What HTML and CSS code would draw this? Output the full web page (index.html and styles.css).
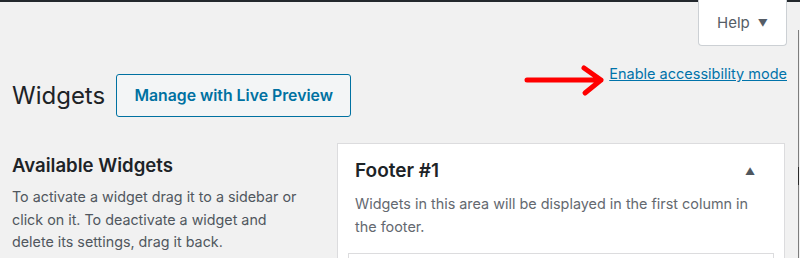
FILE: index.html
```html
<!DOCTYPE html>
<html>
<head>
<meta charset="utf-8">
<link rel="stylesheet" href="styles.css">
</head>
<body>
<div class="adminbar"></div>
<div class="scrollbar"><div class="thumb"></div></div>
<div class="page">
  <div class="screen-meta">
    <button class="help-tab">Help <span class="caret">&#9660;</span></button>
  </div>
  <div class="header">
    <div class="title-group">
      <h1 class="title">Widgets</h1>
      <a class="live-btn" href="#">Manage with Live Preview</a>
    </div>
    <div class="a11y">
      <svg class="arrow" width="86" height="36" viewBox="0 0 86 36">
        <path d="M6 18 H80 M63 6 L80 18 L64 31" fill="none" stroke="#ff0000" stroke-width="5" stroke-linecap="round" stroke-linejoin="round"/>
      </svg>
      <a class="a11y-link" href="#">Enable accessibility mode</a>
    </div>
  </div>
  <div class="columns">
    <div class="left">
      <h2 class="avail-title">Available Widgets</h2>
      <p class="avail-desc">To activate a widget drag it to a sidebar or click on it. To deactivate a widget and delete its settings, drag it back.</p>
    </div>
    <div class="sidebar-card">
      <div class="card-head">
        <h2 class="card-title">Footer #1</h2>
        <span class="card-toggle">&#9650;</span>
      </div>
      <p class="card-desc">Widgets in this area will be displayed in the first column in the footer.</p>
      <div class="card-holder"></div>
    </div>
  </div>
</div>
</body>
</html>
```
FILE: styles.css
```css
html, body {
  margin: 0;
  padding: 0;
  height: 100%;
  overflow: hidden;
}
body {
  background: #f1f1f1;
  font-family: Inter, "Noto Sans", sans-serif;
  color: #1d2327;
  position: relative;
}
.adminbar {
  height: 2px;
  background: #23282d;
}
.scrollbar {
  position: absolute;
  top: 30px;
  bottom: 0;
  left: 798px;
  width: 1px;
  background: #7d7d7d;
}
.thumb {
  margin-top: 137px;
  height: 18px;
  background: #2a2a2a;
}
.page {
  padding: 0 13px 0 10px;
}
.screen-meta {
  display: flex;
  justify-content: flex-end;
}
.help-tab {
  width: 89px;
  height: 46px;
  margin-top: -2px;
  background: #fff;
  border: 1px solid #ccd0d4;
  border-top: none;
  border-radius: 0 0 4px 4px;
  font-family: inherit;
  font-size: 15px;
  color: #555d66;
  display: flex;
  align-items: center;
  justify-content: center;
  gap: 8px;
  padding: 0;
}
.caret {
  font-size: 10px;
  color: #555d66;
}
.header {
  display: flex;
  justify-content: space-between;
  align-items: flex-start;
  margin-top: 27px;
}
.title-group {
  display: flex;
  align-items: center;
  gap: 11px;
  padding-top: 1px;
}
.title {
  margin: 0;
  font-size: 24px;
  font-weight: 400;
  color: #1d2327;
  padding-left: 2px;
}
.live-btn {
  display: flex;
  align-items: center;
  justify-content: center;
  width: 233px;
  height: 41px;
  border: 1px solid #0071a1;
  border-radius: 3px;
  background: #f3f5f6;
  color: #0071a1;
  font-size: 15.8px;
  font-weight: 600;
  text-decoration: none;
}
.a11y {
  display: flex;
  align-items: center;
  margin-top: -11px;
}
.arrow {
  margin-right: 2px;
}
.a11y-link {
  color: #0073aa;
  font-size: 14.5px;
  text-decoration: underline;
  margin-bottom: 13px;
}
.columns {
  display: flex;
  justify-content: space-between;
  margin-top: 26px;
  padding-right: 2px;
}
.left {
  width: 300px;
  padding-top: 11px;
}
.avail-title {
  margin: 0 0 10px 2px;
  font-size: 18.6px;
  font-weight: 600;
  color: #1d2327;
}
.avail-desc {
  margin: 0 0 0 2px;
  font-size: 14.3px;
  line-height: 22.5px;
  color: #50575e;
}
.sidebar-card {
  width: 448px;
  background: #fff;
  border: 1px solid #dcdcde;
  padding: 0 10px;
  box-sizing: border-box;
}
.card-head {
  display: flex;
  justify-content: space-between;
  align-items: center;
  padding: 15px 19px 0 7px;
}
.card-title {
  margin: 0;
  font-size: 19px;
  font-weight: 600;
  color: #1d2327;
}
.card-toggle {
  font-size: 10px;
  color: #50575e;
}
.card-desc {
  margin: 10px 12px 0 7px;
  font-size: 14.4px;
  line-height: 23px;
  color: #646970;
}
.card-holder {
  margin-top: 15px;
  height: 40px;
  border: 1px solid #dcdcde;
  border-bottom: none;
}
```
